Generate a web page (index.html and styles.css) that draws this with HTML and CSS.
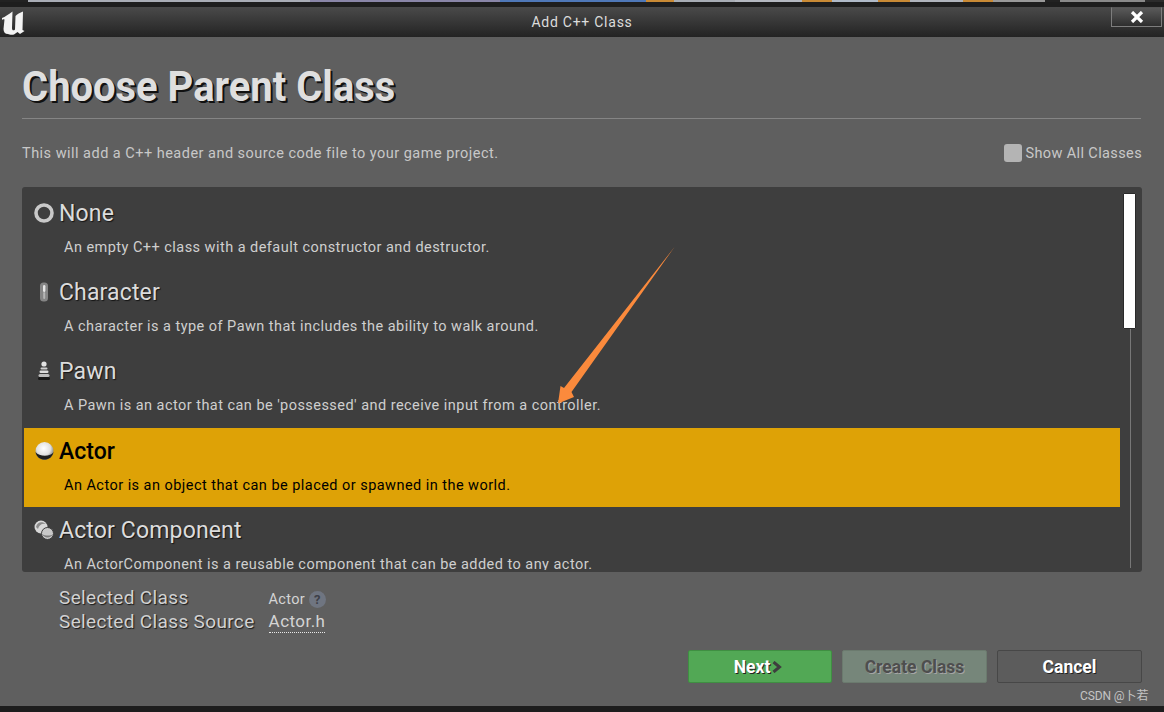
FILE: index.html
```html
<!DOCTYPE html>
<html lang="en">
<head>
<meta charset="utf-8">
<title>Add C++ Class</title>
<link rel="stylesheet" href="styles.css">
</head>
<body>
<div class="window">
  <div class="strip">
    <i class="s1"></i><i class="s2"></i><i class="s3"></i><i class="s4"></i><i class="s5"></i><i class="s6"></i><i class="s7"></i><i class="s5b"></i><i class="s8"></i><i class="s9"></i><i class="s10"></i><i class="s9b"></i><i class="s10b"></i><i class="s11"></i><i class="s12"></i><i class="s13"></i>
  </div>
  <header class="titlebar">
    <svg class="logo" viewBox="0 0 26 26" width="26" height="26"><path fill="#f4f4f4" d="M2 9 C5 8 9 5 12.500 2.500 L12 19 C12 21.500 13.500 22 15 20.500 L15.500 7 C17 5 20 4 23 2.500 L22.500 21 L24.500 22 L20 25 L17.500 23 L14 25.500 C11 26.500 9 25 8 25 C5 25 3.500 23 3.500 20 L4.500 10.500 C3.500 10 2.500 10 2 11 Z"/></svg>
    <span class="wintitle">Add C++ Class</span>
    <button class="close" aria-label="Close"><svg viewBox="0 0 14 12" width="14" height="12"><path d="M2 1 L12 11 M12 1 L2 11" stroke="#fff" stroke-width="3.200" fill="none"/></svg></button>
  </header>
  <main class="content">
    <h1 class="heading">Choose Parent Class</h1>
    <div class="rule"></div>
    <div class="introrow">
      <span>This will add a C++ header and source code file to your game project.</span>
      <label class="showall"><i class="check"></i>Show All Classes</label>
    </div>
    <section class="panel">
      <div class="rows">
        <div class="row">
          <div class="rowhead"><span class="ico"><svg viewBox="0 0 22 22" width="22" height="22"><circle cx="11" cy="11" r="8" fill="none" stroke="#c9c9c9" stroke-width="3.600"/></svg></span><span class="name">None</span></div>
          <p class="desc">An empty C++ class with a default constructor and destructor.</p>
        </div>
        <div class="row">
          <div class="rowhead"><span class="ico"><svg viewBox="0 0 22 22" width="22" height="22"><rect x="7" y="1.500" width="8" height="19" rx="3.500" fill="#858585"/><rect x="10" y="4" width="2.400" height="7" rx="1.200" fill="#e6e6e6"/><rect x="10.200" y="11" width="2" height="7" rx="1" fill="#b5b5b5"/></svg></span><span class="name">Character</span></div>
          <p class="desc">A character is a type of Pawn that includes the ability to walk around.</p>
        </div>
        <div class="row">
          <div class="rowhead"><span class="ico"><svg viewBox="0 0 22 22" width="22" height="22"><circle cx="11" cy="4" r="2.600" fill="#e2e2e2"/><rect x="7.500" y="7.500" width="7" height="2" rx="1" fill="#cfcfcf"/><rect x="6.500" y="10.500" width="9" height="2.500" rx="1.200" fill="#dcdcdc"/><rect x="5.500" y="14" width="11" height="3" rx="1.500" fill="#bdbdbd"/><rect x="5" y="17" width="12" height="3" rx="1.500" fill="#191919"/></svg></span><span class="name">Pawn</span></div>
          <p class="desc">A Pawn is an actor that can be 'possessed' and receive input from a controller.</p>
        </div>
        <div class="row selected">
          <div class="rowhead"><span class="ico"><svg viewBox="0 0 22 22" width="22" height="22"><defs><radialGradient id="sph" cx="45%" cy="35%" r="65%"><stop offset="0" stop-color="#fff"/><stop offset=".6" stop-color="#e0e0e0"/><stop offset="1" stop-color="#6a6a6a"/></radialGradient></defs><circle cx="11.500" cy="11" r="9" fill="url(#sph)"/><path d="M2.500 12 C4 22 19 22 20.500 12 C18 17 6 17 2.500 12 Z" fill="#1e1e1e"/></svg></span><span class="name">Actor</span></div>
          <p class="desc">An Actor is an object that can be placed or spawned in the world.</p>
        </div>
        <div class="row shifted">
          <div class="rowhead"><span class="ico"><svg viewBox="0 0 22 22" width="22" height="22"><circle cx="8" cy="8" r="6.500" fill="#d8d8d8"/><path d="M3 8 C4 3 9 2 13 5 C9 4 6 6 5 10 Z" fill="#8a8a8a"/><circle cx="14.500" cy="14.500" r="6" fill="#c8c8c8" stroke="#3d3d3d"/><path d="M9 15 C11 19 17 20 20.500 15 C18 17 12 17 9 15 Z" fill="#7c7c7c"/></svg></span><span class="name">Actor Component</span></div>
          <p class="desc">An ActorComponent is a reusable component that can be added to any actor.</p>
        </div>
      </div>
      <div class="scrollbar"><div class="thumb"></div><div class="track"></div></div>
    </section>
    <div class="details">
      <div class="labels"><span>Selected Class</span><span>Selected Class Source</span></div>
      <div class="values">
        <span class="val1">Actor<span class="help">?</span></span>
        <span class="val2">Actor.h</span>
      </div>
    </div>
    <div class="actions">
      <button class="btn next">Next<svg viewBox="0 0 10 12" width="10" height="12"><path d="M1.500 1 L7.500 6 L1.500 11" fill="none" stroke="#3e3e3e" stroke-width="3"/></svg></button>
      <button class="btn create">Create Class</button>
      <button class="btn cancel">Cancel</button>
    </div>
  </main>
  <div class="bottom"></div>
  <span class="watermark">CSDN @卜若</span>
  <svg class="arrow" viewBox="0 0 1164 712" width="1164" height="712"><polygon fill="#fb8a3c" points="674.500,247 571.500,392 574,397 558,403.500 560.500,386 564,388"/></svg>
</div>
</body>
</html>
```
FILE: styles.css
```css
* { box-sizing: border-box; }
html, body { margin: 0; padding: 0; }
body { font-family: Roboto, "Noto Sans CJK SC", sans-serif; background: #1c1c1c; }
.window { position: relative; width: 1164px; height: 712px; overflow: hidden; display: flex; flex-direction: column; background: #5f5f5f; }

.strip { display: flex; height: 2px; background: #8f8f8f; flex: none; }
.strip i { display: block; height: 2px; }
.s1 { width: 28px; background: #222; }
.s2 { width: 282px; background: #a9adb6; }
.s3 { width: 190px; background: #8a86a8; }
.s4 { width: 146px; background: #4f78b8; }
.s5 { width: 28px; background: #c98a35; }
.s6 { width: 61px; background: #a8adb5; }
.s7 { width: 67px; background: #b4b8c0; }
.s5b { width: 30px; background: #c98a35; }
.s8 { width: 46px; background: #b0bac8; }
.s9 { width: 32px; background: #c98a35; }
.s10 { width: 53px; background: #b0b4bc; }
.s9b { width: 30px; background: #c98a35; }
.s10b { width: 52px; background: #999; }
.s11 { width: 15px; background: #222; }
.s12 { width: 85px; background: #8a8a8a; }
.s13 { flex: 1; background: #2c2c2c; }

.titlebar { flex: none; height: 35px; padding-top: 5px; background: linear-gradient(#1e1e1e 0, #1e1e1e 5px, #4a4a4a 5px, #232323 35px); display: flex; align-items: center; justify-content: center; position: relative; }
.logo { position: absolute; left: 0; top: 7px; }
.wintitle { color: #dcdcdc; font-size: 14px; letter-spacing: .75px; }
.close { position: absolute; left: 1111px; top: 5px; width: 51px; height: 20px; padding: 0; background: linear-gradient(#5a5a5a, #2e2e2e); border: 1px solid #7d7d7d; border-top-color: #555; display: flex; align-items: center; justify-content: center; }

.content { flex: 1; min-height: 0; padding: 0 22px; display: flex; flex-direction: column; position: relative; }
.heading { margin: 25px 0 0; height: 49px; line-height: 49px; font-size: 42px; font-weight: 700; color: #dfdfdf; text-shadow: 2px 2px 0 #111; transform: scaleX(.951); transform-origin: 0 50%; white-space: nowrap; }
.rule { height: 1px; background: #858585; margin-top: 7px; flex: none; width: 1119px; }
.introrow { display: flex; justify-content: space-between; align-items: center; margin-top: 24px; height: 20px; color: #c8c8c8; font-size: 14.500px; letter-spacing: .48px; }
.showall { display: flex; align-items: center; gap: 3px; font-size: 14.500px; letter-spacing: .38px; }
.check { display: block; width: 18px; height: 18px; border-radius: 3px; background: #b4b4b4; }

.panel { position: relative; margin-top: 24px; height: 385px; background: #3e3e3e; border-radius: 3px; padding: 4px 22px 0 2px; overflow: hidden; flex: none; }
.rows { height: 379px; overflow: hidden; }
.row { height: 79px; padding-top: 7px; color: #e0e0e0; }
.rowhead { display: flex; align-items: center; height: 30px; }
.ico { width: 35px; height: 22px; display: flex; justify-content: flex-end; padding-right: 4px; flex: none; }
.name { font-size: 23px; letter-spacing: .15px; color: #dcdcdc; text-shadow: 1px 1px 1px #151515; }
.desc { margin: 11px 0 0 40px; font-size: 14.500px; letter-spacing: .46px; line-height: 17px; color: #cfcfcf; white-space: nowrap; }
.selected { background: #dea206; padding-top: 8px; }
.shifted { padding-top: 8px; }
.selected .name { color: #000; text-shadow: none; font-weight: 500; letter-spacing: 0; }
.selected .desc { color: #000; }

.scrollbar { position: absolute; left: 1101px; top: 6px; bottom: 4px; width: 13px; display: flex; flex-direction: column; align-items: center; }
.thumb { width: 13px; height: 136px; flex: none; background: #fff; border: 1px solid #2a2a2a; border-radius: 1px; }
.track { width: 1px; flex: 1; margin-left: 1px; background: #777; }

.details { display: flex; margin: 14px 0 0 37px; gap: 14px; height: 48px; flex: none; }
.labels { display: flex; flex-direction: column; font-size: 19px; line-height: 24px; letter-spacing: .35px; color: #d2d2d2; text-shadow: 1px 1px 1px #1a1a1a; }
.values { display: flex; flex-direction: column; color: #d4d4d4; padding-top: 1px; }
.val1 { display: flex; align-items: center; height: 24px; font-size: 14.500px; letter-spacing: .3px; gap: 4px; }
.help { width: 17px; height: 17px; border-radius: 50%; background: #6f7581; color: #3d4048; font-size: 13px; font-weight: 700; display: flex; align-items: center; justify-content: center; }
.val2 { height: 22px; font-size: 17px; line-height: 21px; letter-spacing: .45px; border-bottom: 1px dotted #e8e8e8; align-self: flex-start; }

.actions { display: flex; justify-content: flex-end; gap: 10px; margin-top: 16px; flex: none; }
.btn { font-family: inherit; width: 145px; height: 33px; padding: 0; font-size: 17.500px; font-weight: 700; border-radius: 2px; display: flex; align-items: center; justify-content: center; color: #fff; text-shadow: 1px 1px 0 #222; }
.next { width: 144px; padding-right: 4px; background: #52a855; border: 1px solid #3f8f42; }
.next svg { margin-left: 2px; }
.create { background: #76867a; border: 1px solid #6b7a6e; color: #4e4e4e; text-shadow: 1px 1px 0 #a5a5a5; }
.cancel { background: #5c5c5c; border: 1px solid #474747; }

.bottom { flex: none; height: 6px; background: #1d1d1d; }
.watermark { position: absolute; left: 1080px; top: 689px; font-size: 12px; letter-spacing: -.1px; line-height: 14px; color: #c4c4c4; white-space: nowrap; }
.arrow { position: absolute; left: 0; top: 0; pointer-events: none; }
```
